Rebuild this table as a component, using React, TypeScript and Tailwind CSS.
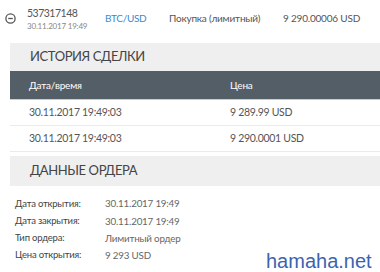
import React from "react";

const rows = [
  ["30.11.2017 19:49:03", "9 289.99 USD"],
  ["30.11.2017 19:49:03", "9 290.0001 USD"],
];

const details = [
  ["Дата открытия:", "30.11.2017 19:49"],
  ["Дата закрытия:", "30.11.2017 19:49"],
  ["Тип ордера:", "Лимитный ордер"],
  ["Цена открытия:", "9 293 USD"],
];

export default function App() {
  return (
    <div
      className="relative w-[380px] h-[272px] overflow-hidden bg-white"
      style={{ fontFamily: "Lato, 'Open Sans', sans-serif" }}
    >
      {/* top order row */}
      <div className="flex items-center h-[36px] pt-[1px]">
        <div className="w-[27px] flex justify-center pl-[1px] pr-[8px]">
          <svg width="11" height="11" viewBox="0 0 11 11">
            <circle cx="5.5" cy="5.5" r="4.6" fill="none" stroke="#555" strokeWidth="1.3" />
            <line x1="3.2" y1="5.5" x2="7.8" y2="5.5" stroke="#555" strokeWidth="1.3" />
          </svg>
        </div>
        <div className="w-[78px] flex flex-col">
          <span className="text-[10.5px] leading-[13px] tracking-[-0.5px] text-[#555]">537317148</span>
          <span className="text-[8px] leading-[10px] tracking-[-0.2px] text-[#888] mt-[1px]">30.11.2017 19:49</span>
        </div>
        <div className="w-[64px] text-[10px] tracking-[-0.3px] text-[#3b8ad0]">BTC/USD</div>
        <div className="w-[114px] text-[10px] tracking-[-0.2px] text-[#555]">Покупка (лимитный)</div>
        <div className="text-[10px] tracking-[-0.2px] text-[#555]">9 290.00006 USD</div>
      </div>

      {/* trade history */}
      <div className="ml-[10px] mt-[7px]">
        <div className="h-[28px] bg-[#efefef] flex items-center pl-[20px] text-[13px] tracking-[-0.4px] text-[#444]">
          ИСТОРИЯ СДЕЛКИ
        </div>
        <div className="h-[29px] bg-[#545e67] flex items-center text-[10px] tracking-[-0.2px] text-white border-b border-[#c9cdd1]">
          <div className="w-[220px] pl-[19px]">Дата/время</div>
          <div>Цена</div>
        </div>
        {rows.map((r, i) => (
          <div
            key={i}
            className="h-[26px] flex items-center text-[10.5px] tracking-[-0.3px] text-[#555] border-b border-[#ebebeb]"
          >
            <div className="w-[220px] pl-[19px]">{r[0]}</div>
            <div>{r[1]}</div>
          </div>
        ))}
      </div>

      {/* order data */}
      <div className="ml-[10px] mt-[4px]">
        <div className="h-[30px] bg-[#efefef] flex items-center pl-[20px] text-[13px] tracking-[-0.4px] text-[#444]">
          ДАННЫЕ ОРДЕРА
        </div>
        <div className="flex flex-col pt-[9px]">
          {details.map((d, i) => (
            <div key={i} className="h-[17.3px] flex items-center">
              <div className="w-[95px] pl-[5px] text-[9.5px] tracking-[-0.2px] text-[#444]">{d[0]}</div>
              <div className="text-[9.8px] tracking-[-0.2px] text-[#666]">{d[1]}</div>
            </div>
          ))}
        </div>
      </div>

      {/* watermark */}
      <div
        className="absolute left-[266px] top-[251px] text-[20px] leading-[20px] text-[#3d63b0]"
        style={{ fontFamily: "'Liberation Sans', Arial, sans-serif" }}
      >
        hamaha.net
      </div>
    </div>
  );
}
